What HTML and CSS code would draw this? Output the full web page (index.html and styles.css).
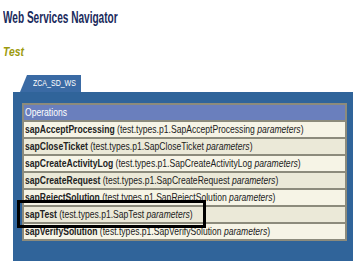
FILE: index.html
```html
<!DOCTYPE html>
<html lang="en">
<head>
    <meta charset="UTF-8">
    <title>Web Services Navigator</title>
    <link rel="stylesheet" href="styles.css">
</head>
<body>

    <h1 class="title"><span class="squeeze">Web Services Navigator</span></h1>
    <h2 class="subtitle"><span class="squeeze">Test</span></h2>

    <div class="navigator">
        <div class="tab"><span class="squeeze">ZCA_SD_WS</span></div>
        <div class="panel">
            <table class="ops">
                <tr><th><span class="squeeze">Operations</span></th></tr>
                <tr><td><span class="squeeze"><b>sapAcceptProcessing</b> (test.types.p1.SapAcceptProcessing <i>parameters</i>)</span></td></tr>
                <tr class="alt"><td><span class="squeeze"><b>sapCloseTicket</b> (test.types.p1.SapCloseTicket <i>parameters</i>)</span></td></tr>
                <tr><td><span class="squeeze"><b>sapCreateActivityLog</b> (test.types.p1.SapCreateActivityLog <i>parameters</i>)</span></td></tr>
                <tr class="alt"><td><span class="squeeze"><b>sapCreateRequest</b> (test.types.p1.SapCreateRequest <i>parameters</i>)</span></td></tr>
                <tr><td><span class="squeeze"><b>sapRejectSolution</b> (test.types.p1.SapRejectSolution <i>parameters</i>)</span></td></tr>
                <tr class="alt"><td><span class="squeeze"><b>sapTest</b> (test.types.p1.SapTest <i>parameters</i>)</span></td></tr>
                <tr><td><span class="squeeze"><b>sapVerifySolution</b> (test.types.p1.SapVerifySolution <i>parameters</i>)</span></td></tr>
            </table>
        </div>
        <!-- marcação em volta da operação sapTest -->
        <div class="highlight"></div>
    </div>

</body>
</html>
```

FILE: styles.css
```css
body {
    font-family: "Liberation Sans", Arial, sans-serif;
    margin: 0;
    background-color: #fff;
    color: #222;
}
/* o print original está comprimido na horizontal */
.squeeze {
    display: inline-block;
    white-space: nowrap;
    transform: scaleX(0.78);
    transform-origin: 0 50%;
}
.title {
    margin: 9px 0 0 3px;
    font-size: 16px;
    line-height: 18px;
    color: #1a2a5c;
}
.title .squeeze {
    transform: scaleX(0.63);
}
.subtitle {
    margin: 18px 0 0 3px;
    font-size: 12px;
    line-height: 14px;
    font-style: italic;
    color: #9c9a0c;
}
.subtitle .squeeze {
    transform: scaleX(0.86);
}
.navigator {
    position: relative;
    margin-top: 16px;
}
.tab {
    margin-left: 20px;
    width: 61px;
    height: 17px;
    line-height: 17px;
    background-color: #3a6aa4;
    color: #fff;
    font-size: 9px;
    padding-left: 13px;
    box-sizing: border-box;
    clip-path: polygon(7px 0, 100% 0, 100% 100%, 0 100%);
}
.panel {
    margin-left: 13px;
    width: 340px;
    height: 200px;
    background-color: #30649a;
    padding: 11px 6px 0 9px;
    box-sizing: border-box;
}
.ops {
    width: 325px;
    table-layout: fixed;
    border-collapse: separate;
    border-spacing: 0;
    border: 2px solid #8c8b7c;
    font-size: 11px;
}
.ops th,
.ops td {
    text-align: left;
    padding: 0 1px;
    height: 15px;
    line-height: 15px;
    overflow: hidden;
}
.ops th {
    background-color: #6a7fbd;
    color: #fff;
    font-weight: normal;
}
.ops td {
    border-top: 2px solid #8c8b7c;
    background-color: #f6f4e6;
}
.ops .alt td {
    background-color: #ebe9d8;
}
.highlight {
    position: absolute;
    left: 17px;
    top: 125px;
    width: 189px;
    height: 28px;
    border: 3px solid #000;
    box-sizing: border-box;
}
```
